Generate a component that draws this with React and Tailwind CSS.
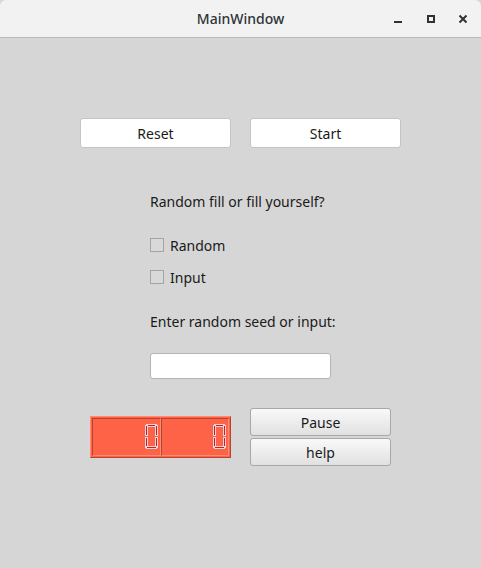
import React from "react";

function Digit() {
  const seg = (x, y, w, h, k) => (
    <rect key={k} x={x} y={y} width={w} height={h} fill="#e8101a" stroke="#dcdcdc" strokeWidth="1" />
  );
  return (
    <svg width="13" height="26" viewBox="0 0 13 26" className="block">
      {seg(1.5, 0.5, 10, 2, "t")}
      {seg(0.5, 1.5, 2, 10, "lu")}
      {seg(10.5, 1.5, 2, 10, "ru")}
      {seg(0.5, 13.5, 2, 10, "ll")}
      {seg(10.5, 13.5, 2, 10, "rl")}
      {seg(1.5, 22.5, 10, 2, "b")}
    </svg>
  );
}

function LcdCell() {
  return (
    <div className="flex-1 h-full flex items-center justify-end pr-[2px] border border-t-[#b8432f] border-l-[#b8432f] border-b-[#ff8d74] border-r-[#ff8d74]">
      <Digit />
    </div>
  );
}

export default function App() {
  const font = { fontFamily: '"Noto Sans", "Open Sans", sans-serif' };
  return (
    <div className="w-[481px] h-[568px] bg-[#d6d6d6] flex flex-col text-[#2e3436]" style={font}>
      <div className="h-[38px] bg-[#f2f2f2] border-b border-[#b9b9b9] rounded-t-[6px] relative flex items-center justify-center shrink-0">
        <span className="text-[14px] font-medium text-[#2e3436]">MainWindow</span>
        <div className="absolute right-0 top-0 h-full flex items-center">
          <div className="w-[33px] flex justify-center">
            <div className="w-[8px] h-[2px] bg-[#2e3436] mt-[7px]" />
          </div>
          <div className="w-[33px] flex justify-center">
            <div className="w-[8px] h-[8px] border-2 border-[#2e3436]" />
          </div>
          <div className="w-[34px] flex justify-center pr-[2px]">
            <svg width="10" height="10" viewBox="0 0 10 10">
              <path d="M1.5 1.5 L8.5 8.5 M8.5 1.5 L1.5 8.5" stroke="#2e3436" strokeWidth="2" />
            </svg>
          </div>
        </div>
      </div>

      <div className="flex flex-col text-[14px] text-[#1a1a1a]">
        <div className="flex gap-[19px] pl-[80px] mt-[80px]">
          <button className="w-[151px] h-[30px] bg-white border border-[#c4c4c4] rounded-[3px] text-[14px]">Reset</button>
          <button className="w-[151px] h-[30px] bg-white border border-[#c4c4c4] rounded-[3px] text-[14px]">Start</button>
        </div>

        <div className="pl-[150px] mt-[44px] h-[20px] leading-[20px]">Random fill or fill yourself?</div>

        <div className="pl-[150px] mt-[23px] h-[20px] flex items-center gap-[6px]">
          <div className="w-[14px] h-[14px] border border-[#a4a4a4] bg-[#d9d9d9]" />
          <span>Random</span>
        </div>
        <div className="pl-[150px] mt-[12px] h-[20px] flex items-center gap-[6px]">
          <div className="w-[14px] h-[14px] border border-[#a4a4a4] bg-[#d9d9d9]" />
          <span>Input</span>
        </div>

        <div className="pl-[150px] mt-[25px] h-[20px] leading-[20px]">Enter random seed or input:</div>

        <div className="pl-[150px] mt-[21px]">
          <div className="w-[181px] h-[26px] bg-white border border-[#b4b4b4] rounded-[3px]" />
        </div>

        <div className="flex items-center pl-[90px] mt-[29px] gap-[19px]">
          <div className="w-[141px] h-[42px] bg-[#ff6347] border border-t-[#ff8a70] border-l-[#ff8a70] border-b-[#b8432f] border-r-[#b8432f] flex p-[1px] gap-0">
            <LcdCell />
            <LcdCell />
          </div>
          <div className="flex flex-col gap-[2px]">
            <button className="w-[141px] h-[28px] border border-[#a8a8a8] rounded-[3px] bg-gradient-to-b from-[#f9f9f9] to-[#e1e1e1] text-[14px]">Pause</button>
            <button className="w-[141px] h-[28px] border border-[#a8a8a8] rounded-[3px] bg-gradient-to-b from-[#f9f9f9] to-[#e1e1e1] text-[14px]">help</button>
          </div>
        </div>
      </div>
    </div>
  );
}
